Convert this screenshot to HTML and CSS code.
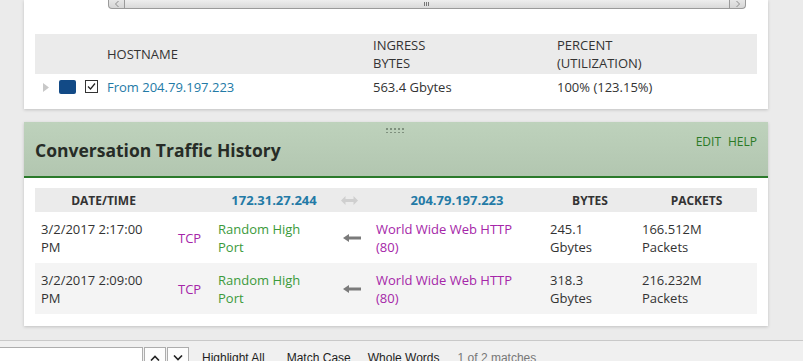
FILE: index.html
```html
<!DOCTYPE html>
<html>
<head>
<meta charset="utf-8">
<link rel="stylesheet" href="styles.css">
</head>
<body>
<div class="page">
  <section class="card card-top">
    <div class="hscroll">
      <div class="hs-btn hs-left"><svg width="4" height="6" viewBox="0 0 4 6"><path d="M3.5 0 L0.5 3 L3.5 6" fill="none" stroke="#8a8a8a"/></svg></div>
      <div class="hs-thumb"><span class="grip"></span></div>
      <div class="hs-btn hs-right"><svg width="4" height="6" viewBox="0 0 4 6"><path d="M0.5 0 L3.5 3 L0.5 6" fill="none" stroke="#8a8a8a"/></svg></div>
    </div>
    <div class="t1">
      <div class="t1-row t1-head">
        <div></div>
        <div>HOSTNAME</div>
        <div>INGRESS<br>BYTES</div>
        <div>PERCENT<br>(UTILIZATION)</div>
      </div>
      <div class="t1-row t1-data">
        <div class="ctrls">
          <svg class="expander" width="6" height="9" viewBox="0 0 6 9"><path d="M0 0 L6 4.5 L0 9 Z" fill="#c8c8c8"/></svg>
          <span class="swatch"></span>
          <svg class="check" width="13" height="13" viewBox="0 0 13 13"><rect x="0.5" y="0.5" width="12" height="12" fill="#fff" stroke="#333"/><path d="M3 6.5 L5.5 9 L10 3.5" fill="none" stroke="#222" stroke-width="1.2"/></svg>
        </div>
        <div><a class="link">From 204.79.197.223</a></div>
        <div>563.4 Gbytes</div>
        <div>100% (123.15%)</div>
      </div>
    </div>
  </section>

  <section class="card card-conv">
    <header class="conv-head">
      <span class="handle"></span>
      <h2 class="conv-title">Conversation Traffic History</h2>
      <div class="conv-actions"><a>EDIT</a><a>HELP</a></div>
    </header>
    <div class="t2">
      <div class="t2-row t2-head">
        <div class="c-center">DATE/TIME</div>
        <div></div>
        <div class="c-center ip">172.31.27.244</div>
        <div class="c-center">
          <svg width="17" height="9" viewBox="0 0 17 9"><path d="M0 4.5 L4.5 0 L4.5 3 L12.5 3 L12.5 0 L17 4.5 L12.5 9 L12.5 6 L4.5 6 L4.5 9 Z" fill="#cfcfcf"/></svg>
        </div>
        <div class="c-center ip">204.79.197.223</div>
        <div class="c-center">BYTES</div>
        <div class="c-center">PACKETS</div>
      </div>
      <div class="t2-row t2-data">
        <div>3/2/2017 2:17:00<br>PM</div>
        <div class="proto">TCP</div>
        <div class="port">Random High<br>Port</div>
        <div class="dir"><svg width="18" height="8" viewBox="0 0 18 8"><path d="M0 4 L6 0 L6 2.5 L18 2.5 L18 5.5 L6 5.5 L6 8 Z" fill="#7a7a7a"/></svg></div>
        <div class="svc">World Wide Web HTTP<br>(80)</div>
        <div>245.1<br>Gbytes</div>
        <div>166.512M<br>Packets</div>
      </div>
      <div class="t2-row t2-data alt">
        <div>3/2/2017 2:09:00<br>PM</div>
        <div class="proto">TCP</div>
        <div class="port">Random High<br>Port</div>
        <div class="dir"><svg width="18" height="8" viewBox="0 0 18 8"><path d="M0 4 L6 0 L6 2.5 L18 2.5 L18 5.5 L6 5.5 L6 8 Z" fill="#7a7a7a"/></svg></div>
        <div class="svc">World Wide Web HTTP<br>(80)</div>
        <div>318.3<br>Gbytes</div>
        <div>216.232M<br>Packets</div>
      </div>
    </div>
  </section>
</div>

<div class="findbar">
  <div class="find-input"></div>
  <div class="find-btn"><svg width="10" height="6" viewBox="0 0 10 6"><path d="M1 5.5 L5 1.5 L9 5.5" fill="none" stroke="#222" stroke-width="1.6"/></svg></div>
  <div class="find-btn"><svg width="10" height="6" viewBox="0 0 10 6"><path d="M1 0.5 L5 4.5 L9 0.5" fill="none" stroke="#222" stroke-width="1.6"/></svg></div>
  <span class="find-opt opt-hl">Highlight All</span>
  <span class="find-opt opt-mc">Match Case</span>
  <span class="find-opt opt-ww">Whole Words</span>
  <span class="find-status">1 of 2 matches</span>
</div>
</body>
</html>
```

FILE: styles.css
```css
* { box-sizing: border-box; }
html, body { margin: 0; padding: 0; }
body {
  background: #ebebeb;
  font-family: "Open Sans", "Liberation Sans", sans-serif;
  font-size: 13px;
  color: #333;
  height: 361px;
  overflow: hidden;
}
.page {
  padding: 0 35px 0 24px;
}
.card {
  background: #fff;
  width: 744px;
  box-shadow: 0 1px 3px rgba(0,0,0,0.18);
}
.card-top {
  padding: 0 11px 9px 11px;
}
.hscroll {
  margin-left: 73px;
  width: 638px;
  height: 9px;
  display: flex;
  background: linear-gradient(#e6e6e6, #d6d6d6);
  border: 1px solid #9a9a9a;
  border-top: none;
  border-radius: 0 0 4px 4px;
}
.hs-btn {
  width: 16px;
  display: flex;
  justify-content: center;
  align-items: center;
}
.hs-left { border-right: 1px solid #9a9a9a; }
.hs-right { border-left: 1px solid #9a9a9a; }
.hs-thumb {
  flex: 1;
  position: relative;
  background: linear-gradient(#eeeeee, #dadada);
}
.grip {
  position: absolute;
  left: 299px;
  bottom: 2px;
  width: 5px;
  height: 4px;
  border-left: 1px solid #777;
  border-right: 1px solid #777;
}
.grip::after {
  content: "";
  position: absolute;
  left: 1px;
  top: 0;
  width: 1px;
  height: 4px;
  background: #777;
}
.t1 { margin-top: 25px; }
.t1-row {
  display: grid;
  grid-template-columns: 72px 266px 184px 200px;
  align-items: center;
}
.t1-head {
  background: #ebebeb;
  height: 40px;
  line-height: 18px;
}
.t1-data {
  height: 26px;
  line-height: 18px;
}
.ctrls {
  display: flex;
  align-items: center;
  padding-left: 8px;
}
.expander { margin-top: 1px; }
.swatch {
  width: 17px;
  height: 14px;
  background: #124a86;
  border-radius: 2px;
  margin-left: 10px;
}
.check { margin-left: 9px; margin-top: -2px; }
.link { color: #237aa6; }

.card-conv {
  margin-top: 13px;
  padding-bottom: 12px;
}
.conv-head {
  position: relative;
  height: 56px;
  background: linear-gradient(#bed2bc, #b2c6b0);
  border-bottom: 2px solid #2b7a2b;
  display: flex;
  align-items: flex-start;
  justify-content: space-between;
  padding: 0 11px;
}
.handle {
  position: absolute;
  left: 361px;
  top: 5px;
  width: 20px;
  height: 6px;
  background-image: radial-gradient(circle, #7f907e 1px, transparent 1.2px);
  background-size: 4px 4px;
}
.conv-title {
  margin: 16px 0 0 0;
  font-size: 17.5px;
  font-weight: 700;
  line-height: 24px;
  color: #272c27;
}
.conv-actions {
  margin-top: 12px;
  display: flex;
  gap: 7px;
  font-size: 12px;
  line-height: 16px;
  color: #2a7a26;
}
.t2 {
  margin: 10px 11px 0 11px;
}
.t2-row {
  display: grid;
  grid-template-columns: 137px 40px 124px 34px 174px 92px 121px;
  align-items: center;
}
.t2-head {
  height: 24px;
  background: #ebebeb;
  font-weight: 700;
  font-size: 12px;
}
.t2-head .ip {
  color: #237aa6;
  font-size: 13px;
}
.c-center {
  text-align: center;
  display: flex;
  justify-content: center;
  align-items: center;
}
.t2-head svg { margin-left: -7px; }
.t2-data {
  height: 51px;
  line-height: 18px;
}
.t2-data > div { padding-left: 6px; }
.t2-data.alt { background: #f4f4f4; }
.proto { color: #a526a8; }
.port { color: #3b9a3b; }
.svc { color: #a526a8; }
.dir { display: flex; padding-left: 7px !important; }

.findbar {
  margin-top: 14px;
  height: 30px;
  border-top: 1px solid #c9c9c9;
  background: #f0f0f0;
  display: flex;
  align-items: flex-start;
  padding-top: 6px;
  font-family: "Liberation Sans", "DejaVu Sans", sans-serif;
  font-size: 12px;
}
.find-input {
  width: 144px;
  height: 22px;
  margin-left: -1px;
  background: #fff;
  border: 1px solid #adadad;
}
.find-btn {
  width: 22px;
  height: 22px;
  border: 1px solid #adadad;
  background: #fdfdfd;
  margin-left: 1px;
  display: flex;
  justify-content: center;
  align-items: center;
}
.find-opt {
  margin-top: 4px;
  color: #1e1e1e;
}
.opt-hl { margin-left: 13px; }
.opt-mc { margin-left: 22px; }
.opt-ww { margin-left: 17px; }
.find-status {
  margin-left: 18px;
  margin-top: 4px;
  color: #777;
}
```
